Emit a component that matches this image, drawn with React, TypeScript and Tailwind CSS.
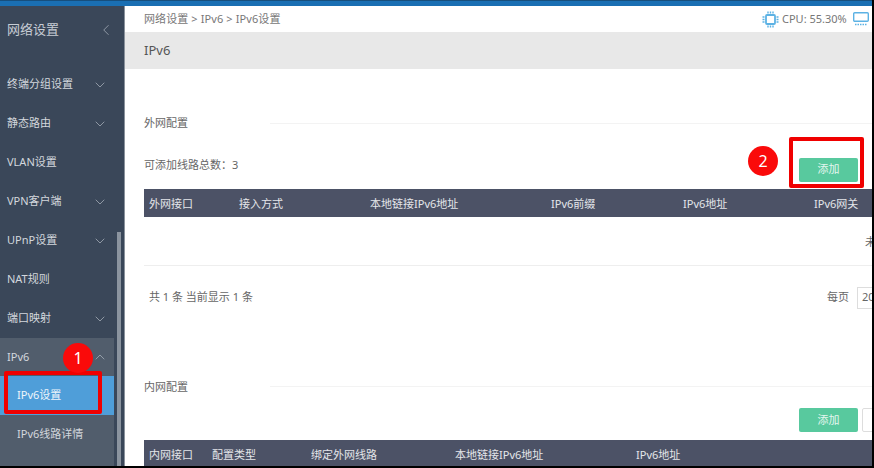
import { ChevronDown, ChevronLeft, ChevronUp } from "lucide-react";

const menu = [
  { label: "终端分组设置", arrow: true },
  { label: "静态路由", arrow: true },
  { label: "VLAN设置", arrow: false },
  { label: "VPN客户端", arrow: true },
  { label: "UPnP设置", arrow: true },
  { label: "NAT规则", arrow: false },
  { label: "端口映射", arrow: true },
];

const wanCols = [
  { label: "外网接口", w: "w-[90px]" },
  { label: "接入方式", w: "w-[131px]" },
  { label: "本地链接IPv6地址", w: "w-[181px]" },
  { label: "IPv6前缀", w: "w-[132px]" },
  { label: "IPv6地址", w: "w-[131px]" },
  { label: "IPv6网关", w: "w-[80px]" },
];

const lanCols = [
  { label: "内网接口", w: "w-[63px]" },
  { label: "配置类型", w: "w-[99px]" },
  { label: "绑定外网线路", w: "w-[144px]" },
  { label: "本地链接IPv6地址", w: "w-[181px]" },
  { label: "IPv6地址", w: "w-[100px]" },
];

function TableHead({ cols }: { cols: { label: string; w: string }[] }) {
  return (
    <div className="flex h-[28px] w-[740px] shrink-0 items-center bg-[#4c5266] pt-[3px] pl-[5px] text-[#e4e6ea]">
      {cols.map((c) => (
        <span key={c.label} className={`${c.w} shrink-0 whitespace-nowrap`}>{c.label}</span>
      ))}
    </div>
  );
}

function SectionTitle({ text }: { text: string }) {
  return (
    <div className="flex items-center">
      <span className="w-[126px] shrink-0 text-[#666]">{text}</span>
      <div className="h-px flex-1 bg-[#f3f3f3]" />
    </div>
  );
}

function AddButton() {
  return (
    <div className="flex h-[24px] w-[59px] items-center justify-center rounded-[2px] bg-[#58c99e] text-[#e4f6ee]">添加</div>
  );
}

function Badge({ n, className }: { n: number; className: string }) {
  return (
    <div className={`absolute flex h-[30px] w-[30px] items-center justify-center rounded-full bg-[#fa0a0a] text-[16px] text-white ${className}`}>
      {n}
    </div>
  );
}

function CpuIcon() {
  return (
    <svg width="17" height="17" viewBox="0 0 17 17" fill="none" stroke="#5cb2e4" strokeWidth="1.4">
      <rect x="4" y="4" width="9" height="9" rx="1" strokeWidth="1.8" />
      <path d="M6 0.5V2.5M8.500 0.5V2.500M11 0.5V2.500M6 14.500V16.500M8.500 14.500V16.500M11 14.500V16.500M0.500 6H2.500M0.500 8.500H2.500M0.500 11H2.500M14.500 6H16.500M14.500 8.500H16.500M14.500 11H16.500" />
    </svg>
  );
}

function MonitorIcon() {
  return (
    <svg width="16" height="14" viewBox="0 0 16 14" fill="none" stroke="#5cb2e4" strokeWidth="1.4" className="shrink-0">
      <rect x="0.700" y="0.700" width="14.600" height="8.600" rx="1" />
      <path d="M2 12.500H14" strokeDasharray="1.500 1" />
    </svg>
  );
}

export default function App() {
  return (
    <div className="relative flex h-[468px] w-[874px] flex-col overflow-hidden border-r-2 border-b-2 border-black bg-white text-[11px] font-['Noto_Sans','Noto_Sans_CJK_SC',sans-serif]">
      <div className="h-[6px] shrink-0 border-t border-[#174f7d] bg-[#1a6fb3]" />
      <div className="flex min-h-0 flex-1">
        {/* sidebar */}
        <aside className="relative flex w-[125px] shrink-0 flex-col border-r-[1px] border-[#8a929c] bg-[#3a4759] text-[#d3d7dd]">
          <div className="flex h-[47px] items-center justify-between pr-[9px] pl-[7px]">
            <span className="text-[13px] text-[#c6ccd4]">网络设置</span>
            <ChevronLeft size={18} strokeWidth={1} className="text-[#aab2bc]" />
          </div>
          <div className="mt-[12px] flex flex-1 flex-col">
            {menu.map((m) => (
              <div key={m.label} className="flex h-[39px] w-[115px] items-center justify-between pr-[7px] pl-[7px]">
                <span className="whitespace-nowrap">{m.label}</span>
                {m.arrow && <ChevronDown size={16} strokeWidth={1.2} className="text-[#a5adb7]" />}
              </div>
            ))}
            <div className="w-[114px] flex-1 bg-[#515d6c]">
              <div className="flex h-[38px] items-center justify-between pr-[6px] pl-[7px]">
                <span>IPv6</span>
                <ChevronUp size={16} strokeWidth={1.2} className="text-[#a5adb7]" />
              </div>
              <div className="flex h-[39px] items-center bg-[#4f9ed9] pl-[17px] text-[#eef5fb]">IPv6设置</div>
              <div className="flex h-[39px] items-center pl-[17px]">IPv6线路详情</div>
            </div>
          </div>
          {/* scrollbar */}
          <div className="absolute top-[226px] right-[3px] bottom-0 w-[4px] bg-[#8b949f]" />
        </aside>

        {/* main */}
        <main className="flex min-w-0 flex-1 flex-col overflow-hidden text-[#666]">
          <div className="flex h-[26px] shrink-0 items-center justify-between pl-[19px] text-[#777]">
            <span className="tracking-[0.1px]">网络设置 &gt; IPv6 &gt; IPv6设置</span>
            <div className="flex w-[110px] shrink-0 items-center gap-[3px]">
              <CpuIcon />
              <span className="w-[68px] shrink-0 whitespace-nowrap">CPU: 55.30%</span>
              <MonitorIcon />
            </div>
          </div>
          <div className="flex h-[37px] shrink-0 items-center bg-[#e8e8e8] pl-[19px] text-[13px] text-[#555]">IPv6</div>

          <div className="flex flex-col pl-[19px]">
            <div className="mt-[46px]"><SectionTitle text="外网配置" /></div>
            <div className="mt-[24px] flex h-[26px] w-[714px] items-start justify-between">
              <span className="pt-[1px]">可添加线路总数：3</span>
              <div className="mt-[2px]"><AddButton /></div>
            </div>
            <div className="mt-[7px]"><TableHead cols={wanCols} /></div>
            <div className="flex h-[49px] w-[740px] items-center justify-end border-b border-[#eee] pt-[4px] pr-[8px]">未</div>
            <div className="mt-[21px] flex h-[22px] w-[740px] items-center justify-between">
              <span className="pl-[5px]">共 1 条 当前显示 1 条</span>
              <div className="flex w-[57px] items-center gap-[8px]">
                <span className="shrink-0">每页</span>
                <div className="flex h-[22px] w-[40px] shrink-0 items-center border border-[#ddd] pl-[4px]">20</div>
              </div>
            </div>
            <div className="mt-[70px]"><SectionTitle text="内网配置" /></div>
            <div className="mt-[13px] flex w-[740px] gap-[4px] pl-[655px]">
              <div className="shrink-0"><AddButton /></div>
              <div className="h-[24px] w-[40px] shrink-0 rounded-[2px] border border-[#ddd]" />
            </div>
            <div className="mt-[8px]"><TableHead cols={lanCols} /></div>
          </div>
        </main>
      </div>

      {/* annotations */}
      <div className="absolute top-[371px] left-[4px] h-[43px] w-[98px] rounded-[2px] border-[4px] border-[#f00000]" />
      <Badge n={1} className="top-[343px] left-[63px]" />
      <div className="absolute top-[137px] left-[789px] h-[51px] w-[75px] rounded-[2px] border-[4px] border-[#f00000]" />
      <Badge n={2} className="top-[146px] left-[748px]" />
    </div>
  );
}
